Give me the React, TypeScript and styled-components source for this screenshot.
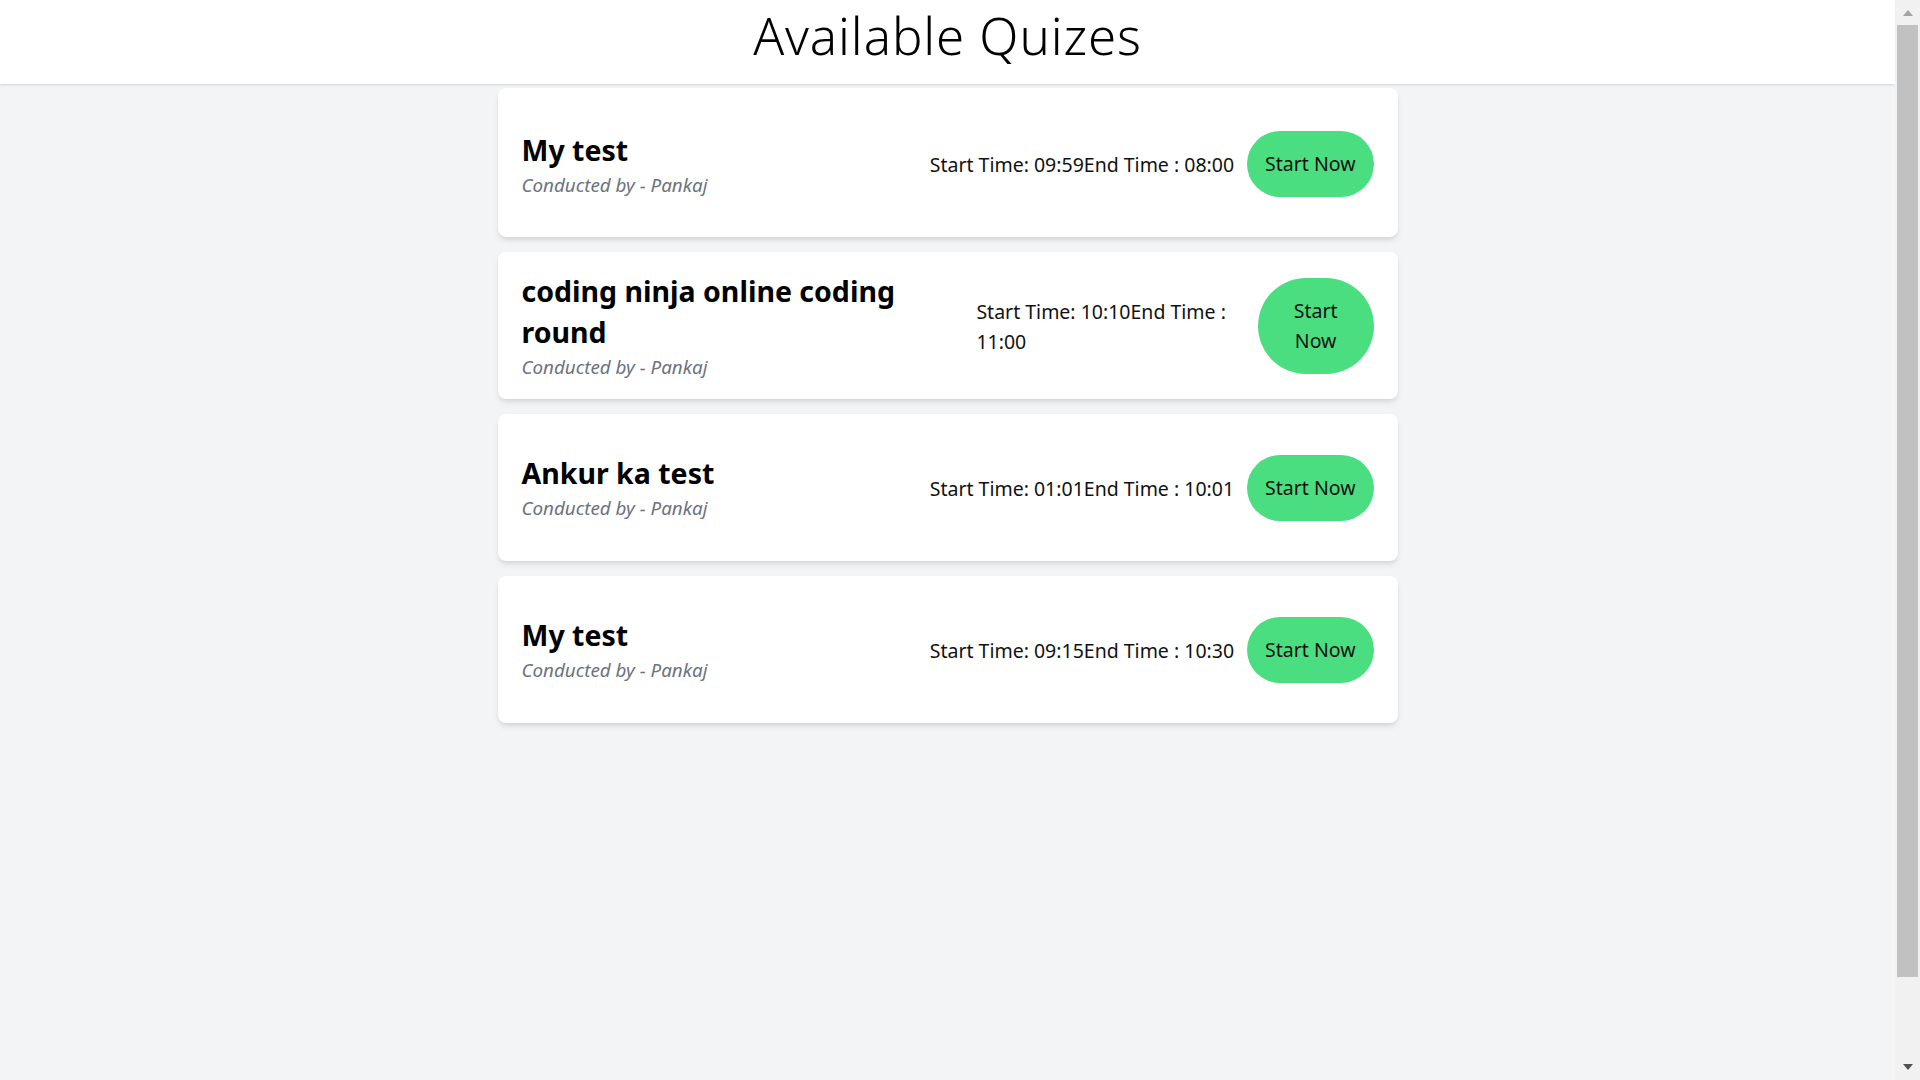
import React from "react";
import styled, { createGlobalStyle } from "styled-components";

const GlobalStyle = createGlobalStyle`
  html, body {
    margin: 0;
    height: 100%;
    overflow: hidden;
  }
  body {
    background: #f3f4f6;
    font-family: "Noto Sans", "Open Sans", "Liberation Sans", sans-serif;
    color: #111;
  }
`;

const Viewport = styled.div`
  display: flex;
  height: 100vh;
  overflow: hidden;
`;

const Page = styled.div`
  flex: 1;
  min-width: 0;
  overflow: hidden;
  background: #f3f4f6;
`;

const ScrollRail = styled.div`
  width: 25px;
  flex-shrink: 0;
  display: flex;
  flex-direction: column;
  background: #f1f1f1;
`;

const ArrowButton = styled.div`
  height: 24px;
  display: flex;
  align-items: center;
  justify-content: center;
`;

const Arrow = styled.span<{ $dir: "up" | "down" }>`
  width: 0;
  height: 0;
  border-left: 5.5px solid transparent;
  border-right: 5.5px solid transparent;
  ${(p) =>
    p.$dir === "up"
      ? "border-bottom: 6px solid #a3a3a3; margin-top: 2px;"
      : "border-top: 6px solid #505050; margin-top: -2px;"}
`;

const Track = styled.div`
  flex: 1;
  padding: 1px 2px 0;
`;

const Thumb = styled.div`
  height: 952px;
  background: #c1c1c1;
`;

const Header = styled.header`
  position: relative;
  z-index: 1;
  box-sizing: border-box;
  height: 84px;
  background: #ffffff;
  text-align: center;
  box-shadow: 0 1px 3px 0 rgba(0, 0, 0, 0.1), 0 1px 2px -1px rgba(0, 0, 0, 0.1);
`;

const PageTitle = styled.h1`
  margin: 0;
  font-weight: 300;
  font-size: 51px;
  line-height: normal;
  letter-spacing: 0.9px;
  color: #000;
`;

const Main = styled.main`
  min-height: 100vh;
`;

const List = styled.div`
  width: 900px;
  margin: 0 auto;
  padding-top: 4px;
  display: flex;
  flex-direction: column;
  gap: 15px;
`;

const Card = styled.div`
  box-sizing: border-box;
  height: 147px;
  padding: 0 24px;
  display: flex;
  align-items: center;
  justify-content: space-between;
  column-gap: 38px;
  background: #ffffff;
  border-radius: 8px;
  box-shadow: 0 4px 6px -1px rgba(0, 0, 0, 0.1), 0 2px 4px -2px rgba(0, 0, 0, 0.1);

  &:first-child {
    height: 149px;
    padding-top: 3px;
  }
`;

const Info = styled.div`
  display: flex;
  flex-direction: column;
`;

const QuizTitle = styled.h2`
  margin: 0;
  font-weight: 700;
  font-size: 28.5px;
  line-height: 41px;
  color: #000;
`;

const Conductor = styled.p`
  margin: 0;
  font-style: italic;
  font-size: 18.8px;
  line-height: 28px;
  color: #6b7280;
`;

const Actions = styled.div`
  display: flex;
  align-items: center;
  gap: 13px;
`;

const Timing = styled.p`
  margin: 0;
  padding-top: 2px;
  font-size: 19.5px;
  line-height: 30px;
  color: #111;
`;

const StartButton = styled.button`
  padding: 18px;
  border: none;
  border-radius: 9999px;
  background: #4ade80;
  color: #111;
  font-family: inherit;
  font-size: 19.5px;
  line-height: 30px;
  text-align: center;
  cursor: pointer;
`;

type Quiz = {
  title: string;
  by: string;
  start: string;
  end: string;
};

const quizzes: Quiz[] = [
  { title: "My test", by: "Pankaj", start: "09:59", end: "08:00" },
  { title: "coding ninja online coding round", by: "Pankaj", start: "10:10", end: "11:00" },
  { title: "Ankur ka test", by: "Pankaj", start: "01:01", end: "10:01" },
  { title: "My test", by: "Pankaj", start: "09:15", end: "10:30" },
];

export default function App() {
  return (
    <>
      <GlobalStyle />
      <Viewport>
        <Page>
          <Header>
            <PageTitle>Available Quizes</PageTitle>
          </Header>
          <Main>
            <List>
              {quizzes.map((q, i) => (
                <Card key={i}>
                  <Info>
                    <QuizTitle>{q.title}</QuizTitle>
                    <Conductor>Conducted by - {q.by}</Conductor>
                  </Info>
                  <Actions>
                    <Timing>
                      Start Time: {q.start}End Time : {q.end}
                    </Timing>
                    <StartButton>Start Now</StartButton>
                  </Actions>
                </Card>
              ))}
            </List>
          </Main>
        </Page>
        <ScrollRail aria-hidden="true">
          <ArrowButton>
            <Arrow $dir="up" />
          </ArrowButton>
          <Track>
            <Thumb />
          </Track>
          <ArrowButton>
            <Arrow $dir="down" />
          </ArrowButton>
        </ScrollRail>
      </Viewport>
    </>
  );
}
